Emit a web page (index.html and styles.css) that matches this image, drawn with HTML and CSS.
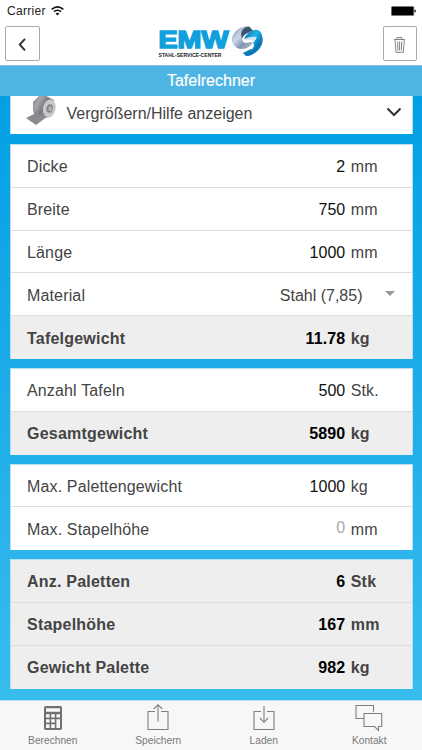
FILE: index.html
```html
<!DOCTYPE html>
<html lang="de">
<head>
<meta charset="utf-8">
<meta name="viewport" content="width=device-width, initial-scale=1">
<title>Tafelrechner</title>
<link rel="stylesheet" href="styles.css">
</head>
<body>
<div class="app">
  <div class="status">
    <span>Carrier</span>
    <svg class="wifi" width="13" height="10" viewBox="0 0 13 10" fill="none" stroke="#111" stroke-width="1.6"><path d="M.7 3.4Q6.5-1.6 12.3 3.4M2.9 5.7q3.6-2.9 7.2 0"/><path d="M4.5 7.4q2-1.5 4 0l-2 2.2z" fill="#111" stroke="none"/></svg>
    <svg class="battery" width="25" height="10" viewBox="0 0 25 10"><rect x=".4" y=".4" width="22.4" height="9.2" rx="1.2" stroke="#777" stroke-width=".8"/><path d="M23.5 3.5q1.4.2 1.4 1.5t-1.4 1.5z"/></svg>
  </div>
  <header class="header">
    <button class="square" aria-label="Zurück"><svg width="34" height="34" viewBox="0 0 34 34" fill="none" stroke="#333" stroke-width="2"><path d="M20 11.8 14.8 17.6 20 23.4"/></svg></button>
    <div class="logo">
      <svg class="wordmark" width="73" height="32" viewBox="0 0 73 32"><text class="emw" x=".5" y="22.3" textLength="70" lengthAdjust="spacingAndGlyphs">EMW</text><text class="claim" x=".5" y="30.5" textLength="63" lengthAdjust="spacingAndGlyphs">STAHL-SERVICE-CENTER</text></svg>
      <svg class="swirl" width="33" height="32" viewBox="0 0 33 32">
        <defs>
          <linearGradient id="silver" x1="0" y1="0" x2="1" y2="1"><stop offset="0" stop-color="#718fae"/><stop offset=".4" stop-color="#cdd7e7"/><stop offset=".65" stop-color="#8095b5"/><stop offset="1" stop-color="#aebdd2"/></linearGradient>
          <linearGradient id="blue" x1="0" y1="0" x2="1" y2="1"><stop offset="0" stop-color="#075c94"/><stop offset=".4" stop-color="#22b5e9"/><stop offset=".7" stop-color="#0874b3"/><stop offset="1" stop-color="#30bbea"/></linearGradient>
        </defs>
        <path fill="url(#silver)" d="M17 0Q9 .5 4 6-1 12 2 18q3 5 9 5 5 0 9-4l2-3-8 1q-4-2-2-6 3-4 9-5l-2-5z"/>
        <path fill="#375573" d="M14 1.5 18 .5l4 4-6 2.5q-4 2-5 5Q8 6 14 1.5"/>
        <path fill="url(#blue)" d="M13 13q3-7 10-9 6-1 8 5 2 8-2 13-5 7-13 8l-4-3q7 0 10-5 2-3 0-5l3-4q-5-2-12 0"/>
        <path fill="#d5e4f0" d="m13 14 3-2q5-2 10-1l-3 5q-1-3-10-2"/>
        <path fill="#087cba" d="m12 27 8-4 4 3q-4 4-9 4z"/>
      </svg>
    </div>
    <button class="square" aria-label="Löschen"><svg width="34" height="34" viewBox="0 0 34 34" fill="none" stroke="#777" stroke-width=".9"><path d="M11 12.5h11M13.9 12.2v-1.6h5v1.6M12 12.8l1 12.500h7.300l1-12.500M14.6 14.500l.4 9M16.600 14.500v9M18.700 14.500l-.4 9"/></svg></button>
  </header>
  <h1 class="title"><span>Tafelrechner</span></h1>
  <main class="content">
    <section class="card help">
      <svg class="roll" width="31" height="30" viewBox="0 0 31 30">
        <defs><linearGradient id="steel" x1="0" y1="0" x2="1" y2=".6"><stop offset="0" stop-color="#77777b"/><stop offset=".3" stop-color="#a7a7ab"/><stop offset=".6" stop-color="#78787d"/><stop offset="1" stop-color="#aaaab0"/></linearGradient></defs>
        <path fill="url(#steel)" d="M7 6 13 0h7l8 4-3 17-7 1-8-3-3-5z"/>
        <path fill="#8a8a8f" d="m7 10 1 8-8 4 10 7 12-9-8-1-5-3z"/>
        <ellipse cx="23.3" cy="12.3" rx="6.3" ry="9" transform="rotate(12 23.3 12.3)" fill="#c9c9cc"/>
        <ellipse cx="23.6" cy="12.5" rx="3.2" ry="4.3" transform="rotate(12 23.6 12.5)" fill="#85858a"/>
        <ellipse cx="24.2" cy="12.8" rx="1.7" ry="2.4" fill="#b5b5ba"/>
      </svg>
      <span class="label"><span>Vergrößern/Hilfe anzeigen</span></span>
      <svg class="chevron" width="16" height="10" viewBox="0 0 16 10" fill="none" stroke="#333" stroke-width="2"><path d="m1.5 1.5 6.5 6.5 6.5-6.5"/></svg>
    </section>
    <section class="card">
      <div class="row"><span>Dicke</span><span class="value">2</span><span class="unit">mm</span></div>
      <div class="row"><span>Breite</span><span class="value">750</span><span class="unit">mm</span></div>
      <div class="row"><span>Länge</span><span class="value">1000</span><span class="unit">mm</span></div>
      <div class="row select"><span>Material</span><span class="choice">Stahl (7,85)</span><i class="caret"></i></div>
      <div class="row result"><span>Tafelgewicht</span><span class="value">11.78</span><span class="unit">kg</span></div>
    </section>
    <section class="card">
      <div class="row"><span>Anzahl Tafeln</span><span class="value">500</span><span class="unit">Stk.</span></div>
      <div class="row result"><span>Gesamtgewicht</span><span class="value">5890</span><span class="unit">kg</span></div>
    </section>
    <section class="card">
      <div class="row"><span>Max. Palettengewicht</span><span class="value">1000</span><span class="unit">kg</span></div>
      <div class="row"><span>Max. Stapelhöhe</span><span class="value empty">0</span><span class="unit">mm</span></div>
    </section>
    <section class="card">
      <div class="row result"><span>Anz. Paletten</span><span class="value">6</span><span class="unit">Stk</span></div>
      <div class="row result"><span>Stapelhöhe</span><span class="value">167</span><span class="unit">mm</span></div>
      <div class="row result"><span>Gewicht Palette</span><span class="value">982</span><span class="unit">kg</span></div>
    </section>
  </main>
  <nav class="tabs">
    <a class="tab"><svg width="30" height="30" viewBox="0 0 30 30"><rect x="6" y="2" width="18" height="24" rx="1.7" fill="#707070"/><path fill="#f7f7f7" d="M8 4.2h14v3.6H8zM8 10.3h3.6v3.2H8zM13.2 10.3h3.6v3.2h-3.6zM18.4 10.3H22v3.2h-3.6zM8 15.2h3.6v3.2H8zM13.2 15.2h3.6v3.2h-3.6zM18.4 15.2H22v8.8h-3.6zM8 20.3h3.6V24H8zM13.2 20.3h3.6V24h-3.6z"/></svg><span>Berechnen</span></a>
    <a class="tab"><svg width="30" height="30" viewBox="0 0 30 30"><path d="M12 7.5H5v18h20v-18h-7M15 17.5V1M10.8 5 15 .7 19.2 5"/></svg><span>Speichern</span></a>
    <a class="tab"><svg width="30" height="30" viewBox="0 0 30 30"><path d="M12 7.5H5v18h20v-18h-7M15 2v16M10.8 14l4.2 4.3 4.2-4.3"/></svg><span>Laden</span></a>
    <a class="tab"><svg width="30" height="30" viewBox="0 0 30 30"><path d="M9.5 14.5H2v-13h17.5v6.2M10 9.5h17.7v13h-3.200V26.500L20.500 22.500H10z"/></svg><span>Kontakt</span></a>
  </nav>
</div>
</body>
</html>
```
FILE: styles.css
```css
* { box-sizing: border-box; }
body { margin: 0; font-family: "Liberation Sans", Arial, sans-serif; color: #444; }
.app { width: 422px; height: 750px; display: flex; flex-direction: column; background: #fff; overflow: hidden; }
.status { height: 22px; flex: none; display: flex; align-items: center; padding: 0 6px 0 7px; font-size: 12px; color: #222; letter-spacing: .3px; }
.wifi { margin-left: 5px; }
.battery { margin-left: auto; }
.header { height: 43px; flex: none; display: flex; justify-content: space-between; align-items: flex-start; padding: 4px 5px 0; }
.square { width: 34.5px; height: 35px; padding: 0; border: 1px solid #aaa; border-radius: 2px; background: #fff; display: flex; align-items: center; justify-content: center; }
.square svg { flex: none; }
.logo { display: flex; width: 106px; }
.wordmark { overflow: visible; flex: none; }
.emw { font: bold 24.5px "Liberation Sans", Arial, sans-serif; fill: #129fdd; stroke: #129fdd; stroke-width: 1.6px; }
.claim { font: bold 5.4px "Liberation Sans", Arial, sans-serif; fill: #222; }
.title { height: 31px; flex: none; margin: 0; background: #4eb4e3; border-top: 1px solid #8fc3dc; color: #fff; font-size: 16px; font-weight: normal; line-height: 30px; text-align: center; -webkit-text-stroke: .2px #fff; }
.content { height: 604px; flex: none; padding: 0 9.5px; background: linear-gradient(#039fe5, #38bcee); }
.card { margin-bottom: 9px; border: 1px solid #b5dff2; border-bottom: 0; background: #fff; }
.help { height: 37.5px; margin-bottom: 10.5px; border-top: 0; display: flex; align-items: flex-start; padding-right: 10px; }
.roll { margin: 0 0 0 15px; }
.label { margin-left: 10px; font-size: 16px; line-height: 35px; }
.chevron { margin: 11px 0 0 auto; }
.row { height: 42.8px; display: grid; grid-template-columns: 1fr 100px 66.3px; align-items: center; padding: 2.6px 0 0 16.5px; border-bottom: 1px solid #ddd; font-size: 16px; letter-spacing: .15px; }
.row:last-child { border-bottom: 0; padding-top: 2px; }
.value { text-align: right; color: #111; letter-spacing: 0; }
.unit { padding-left: 5.5px; }
.select { grid-template-columns: 1fr auto 49px; }
.choice { letter-spacing: 0; }
.caret { margin: -4px 0 0 22px; width: 0; height: 0; border: 5px solid transparent; border-top: 5px solid #999; border-bottom: 0; }
.result { background: #eee; font-weight: bold; letter-spacing: .22px; }
.result .value { color: #000; letter-spacing: .1px; }
.empty { color: #aaa; position: relative; top: -2px; }
.tabs { height: 50px; flex: none; display: grid; grid-template-columns: repeat(4, 1fr); background: #f7f7f7; border-top: 1px solid #b5dff2; }
.tab { display: flex; flex-direction: column; align-items: center; padding-top: 3px; color: #777; font-size: 10.2px; line-height: 14px; }
.tab svg { fill: none; stroke: none; }
.tab svg > path:only-child { stroke: #808080; stroke-width: 1.1px; }
```
